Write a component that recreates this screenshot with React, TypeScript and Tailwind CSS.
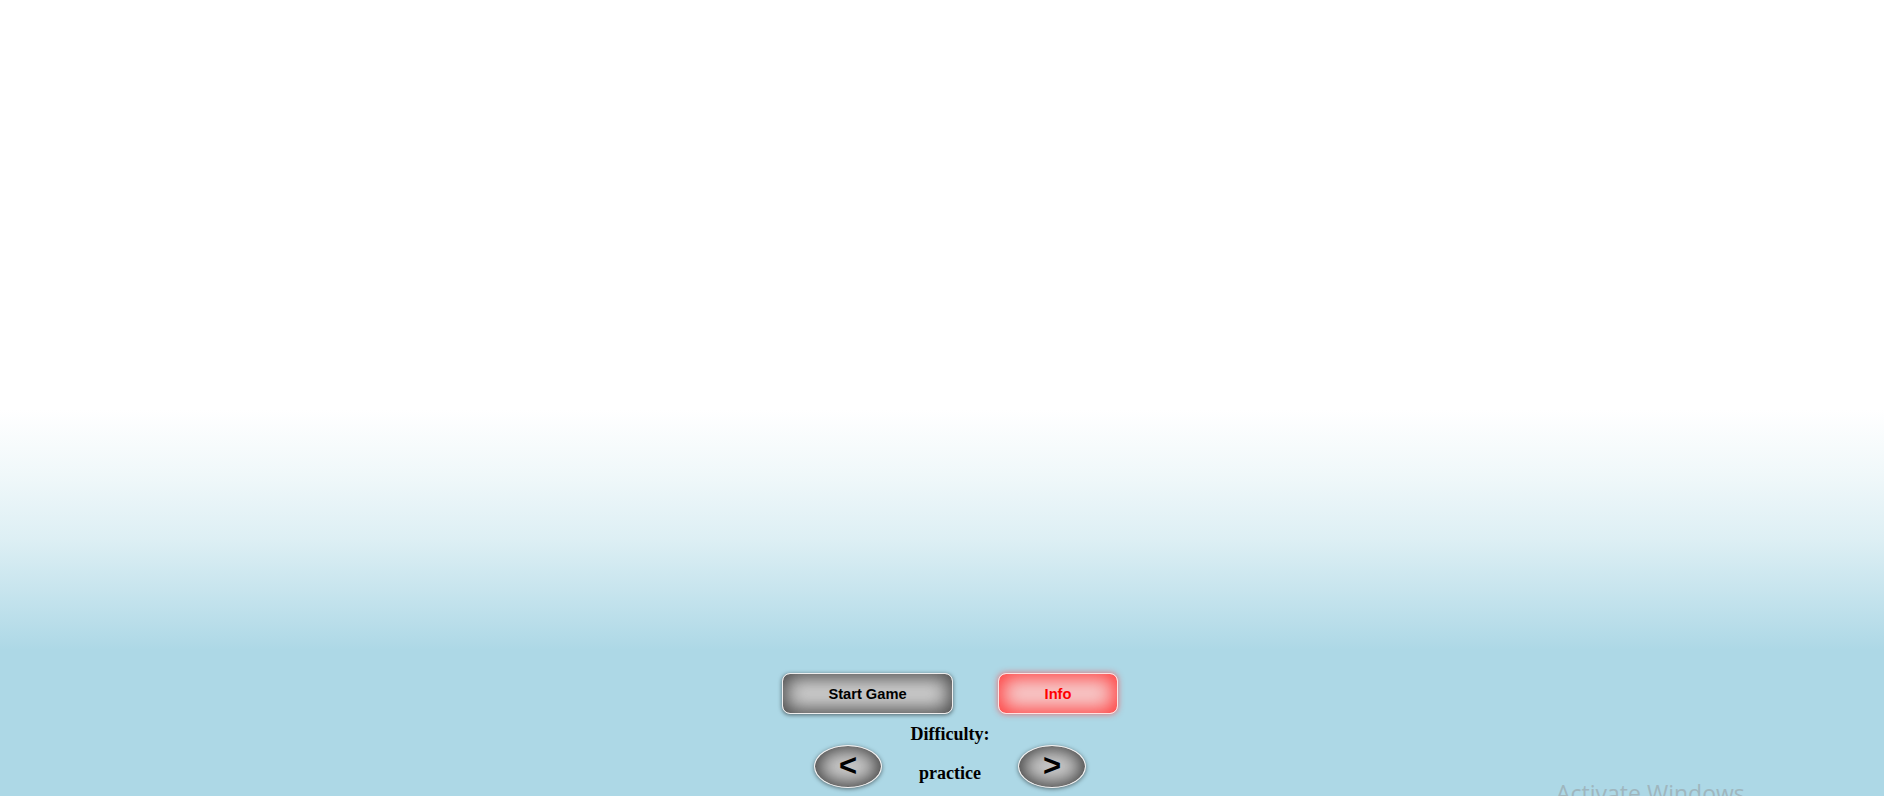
export default function App() {
  return (
    <div className="relative h-screen w-full overflow-hidden bg-[#add8e6]">
      {/* sky / play area */}
      <div className="h-[650px] w-full bg-[linear-gradient(to_bottom,#ffffff_0%,#ffffff_63%,#f0f8fa_73%,#ddeff4_83%,#c4e3ed_92%,#add8e6_100%)]" />

      <div className="flex flex-col items-center pl-4">
        <div className="mt-[23px] flex gap-[45px]">
          <button className="h-[41px] w-[171px] rounded-[8px] border border-[#eeeeee] bg-[#d0d0d0] text-[14.67px] font-bold text-black shadow-[inset_0_0_20px_3px_#404040,0_1px_4px_rgba(0,0,0,0.55)] [font-family:'Liberation_Sans',Arial,sans-serif]">
            Start Game
          </button>
          <button className="h-[41px] w-[120px] rounded-[8px] border border-[#fbe3e3] bg-[#f6cfcf] text-[14.67px] font-bold text-[#ff0000] shadow-[inset_0_0_20px_4px_#ff3c3c,0_0_6px_rgba(255,60,60,0.7)] [font-family:'Liberation_Sans',Arial,sans-serif]">
            Info
          </button>
        </div>

        <div className="mt-[10px] text-[18px] leading-[20px] font-bold text-black [font-family:'Liberation_Serif','Times_New_Roman',serif]">
          Difficulty:
        </div>

        <div className="mt-[1px] flex items-start">
          <button className="flex h-[43px] w-[68px] items-center justify-center rounded-[50%] border border-[#f2f2f2] bg-[#cacaca] pb-[2px] text-[31px] leading-none font-bold text-black shadow-[inset_0_0_18px_3px_#3c3c3c,0_1px_4px_rgba(0,0,0,0.5)] [font-family:'Liberation_Sans',Arial,sans-serif]">
            &lt;
          </button>
          <div className="w-[136px] pt-[18px] text-center text-[18px] leading-[20px] font-bold text-black [font-family:'Liberation_Serif','Times_New_Roman',serif]">
            practice
          </div>
          <button className="flex h-[43px] w-[68px] items-center justify-center rounded-[50%] border border-[#f2f2f2] bg-[#cacaca] pb-[2px] text-[31px] leading-none font-bold text-black shadow-[inset_0_0_18px_3px_#3c3c3c,0_1px_4px_rgba(0,0,0,0.5)] [font-family:'Liberation_Sans',Arial,sans-serif]">
            &gt;
          </button>
        </div>
      </div>

      {/* OS watermark */}
      <div className="pointer-events-none absolute left-[1556px] top-[782px] text-[23px] leading-none text-[#9fb6be] [font-family:'Open_Sans',sans-serif]">
        Activate Windows
      </div>
    </div>
  );
}
